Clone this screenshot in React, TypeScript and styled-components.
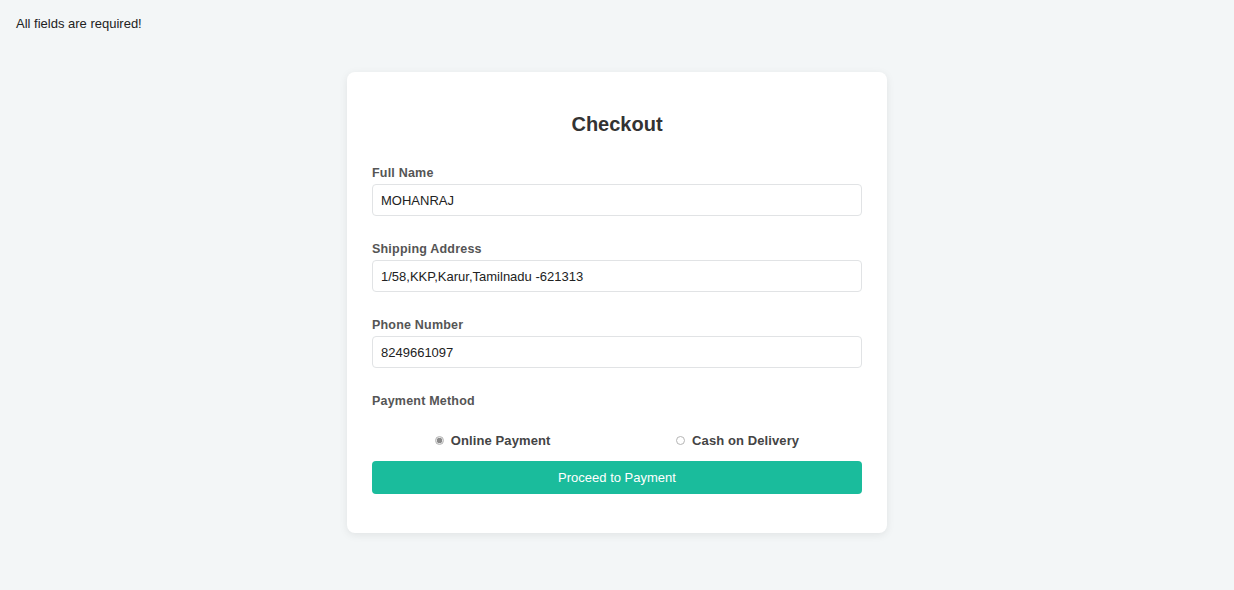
import React, { useState } from 'react'
import styled, { createGlobalStyle } from 'styled-components'

const GlobalStyle = createGlobalStyle`
  html, body {
    margin: 0;
    padding: 0;
    background: #f3f6f7;
    font-family: 'Liberation Sans', Arial, sans-serif;
  }
`

const Page = styled.div`
  min-height: 590px;
  box-sizing: border-box;
  padding: 16px 16px 0;
`

const Notice = styled.div`
  font-size: 13px;
  color: #222;
  line-height: 15px;
`

const Card = styled.form`
  width: 540px;
  box-sizing: border-box;
  margin: 41px auto 0;
  background: #fff;
  border-radius: 8px;
  box-shadow: 0 2px 8px rgba(0, 0, 0, 0.08);
  padding: 40px 25px 39px;
`

const Title = styled.h2`
  margin: 0 0 30px;
  text-align: center;
  font-size: 20px;
  line-height: 24px;
  font-weight: 700;
  color: #333;
`

const Field = styled.div<{ $last?: boolean }>`
  display: flex;
  flex-direction: column;
  margin-bottom: ${({ $last }) => ($last ? '23px' : '26px')};
`

const Label = styled.label`
  font-size: 12.5px;
  font-weight: 700;
  color: #555;
  letter-spacing: 0.2px;
  line-height: 15px;
  margin-bottom: 3px;
`

const Input = styled.input`
  height: 32px;
  box-sizing: border-box;
  border: 1px solid #e1e3e5;
  border-radius: 4px;
  padding: 0 8px;
  font-family: inherit;
  font-size: 13px;
  color: #222;
  outline: none;
`

const Radios = styled.div`
  display: flex;
  justify-content: space-around;
  margin: 24px 0 13px;
`

const Option = styled.label`
  display: flex;
  align-items: center;
  gap: 7px;
  font-size: 13px;
  font-weight: 700;
  color: #444;
  letter-spacing: 0.1px;
  cursor: pointer;
`

const Dot = styled.span<{ $checked: boolean }>`
  width: 9px;
  height: 9px;
  box-sizing: border-box;
  border-radius: 50%;
  border: 1px solid #b5b5b5;
  background: ${({ $checked }) => ($checked ? 'radial-gradient(circle, #8a8a8a 0 2.5px, #e6e6e6 3px)' : '#fff')};
`

const Button = styled.button`
  width: 100%;
  height: 33px;
  border: none;
  border-radius: 4px;
  background: #1abc9c;
  color: #fff;
  font-family: inherit;
  font-size: 13px;
  cursor: pointer;
`

const fields = [
  { label: 'Full Name', value: 'MOHANRAJ' },
  { label: 'Shipping Address', value: '1/58,KKP,Karur,Tamilnadu -621313' },
  { label: 'Phone Number', value: '8249661097' },
]

export default function App() {
  const [method, setMethod] = useState('online')

  return (
    <Page>
      <GlobalStyle />
      <Notice>All fields are required!</Notice>
      <Card onSubmit={(e) => e.preventDefault()}>
        <Title>Checkout</Title>
        {fields.map((f, i) => (
          <Field key={f.label} $last={i === fields.length - 1}>
            <Label>{f.label}</Label>
            <Input defaultValue={f.value} />
          </Field>
        ))}
        <Label>Payment Method</Label>
        <Radios>
          <Option onClick={() => setMethod('online')}>
            <Dot $checked={method === 'online'} />
            Online Payment
          </Option>
          <Option onClick={() => setMethod('cod')}>
            <Dot $checked={method === 'cod'} />
            Cash on Delivery
          </Option>
        </Radios>
        <Button type="submit">Proceed to Payment</Button>
      </Card>
    </Page>
  )
}
